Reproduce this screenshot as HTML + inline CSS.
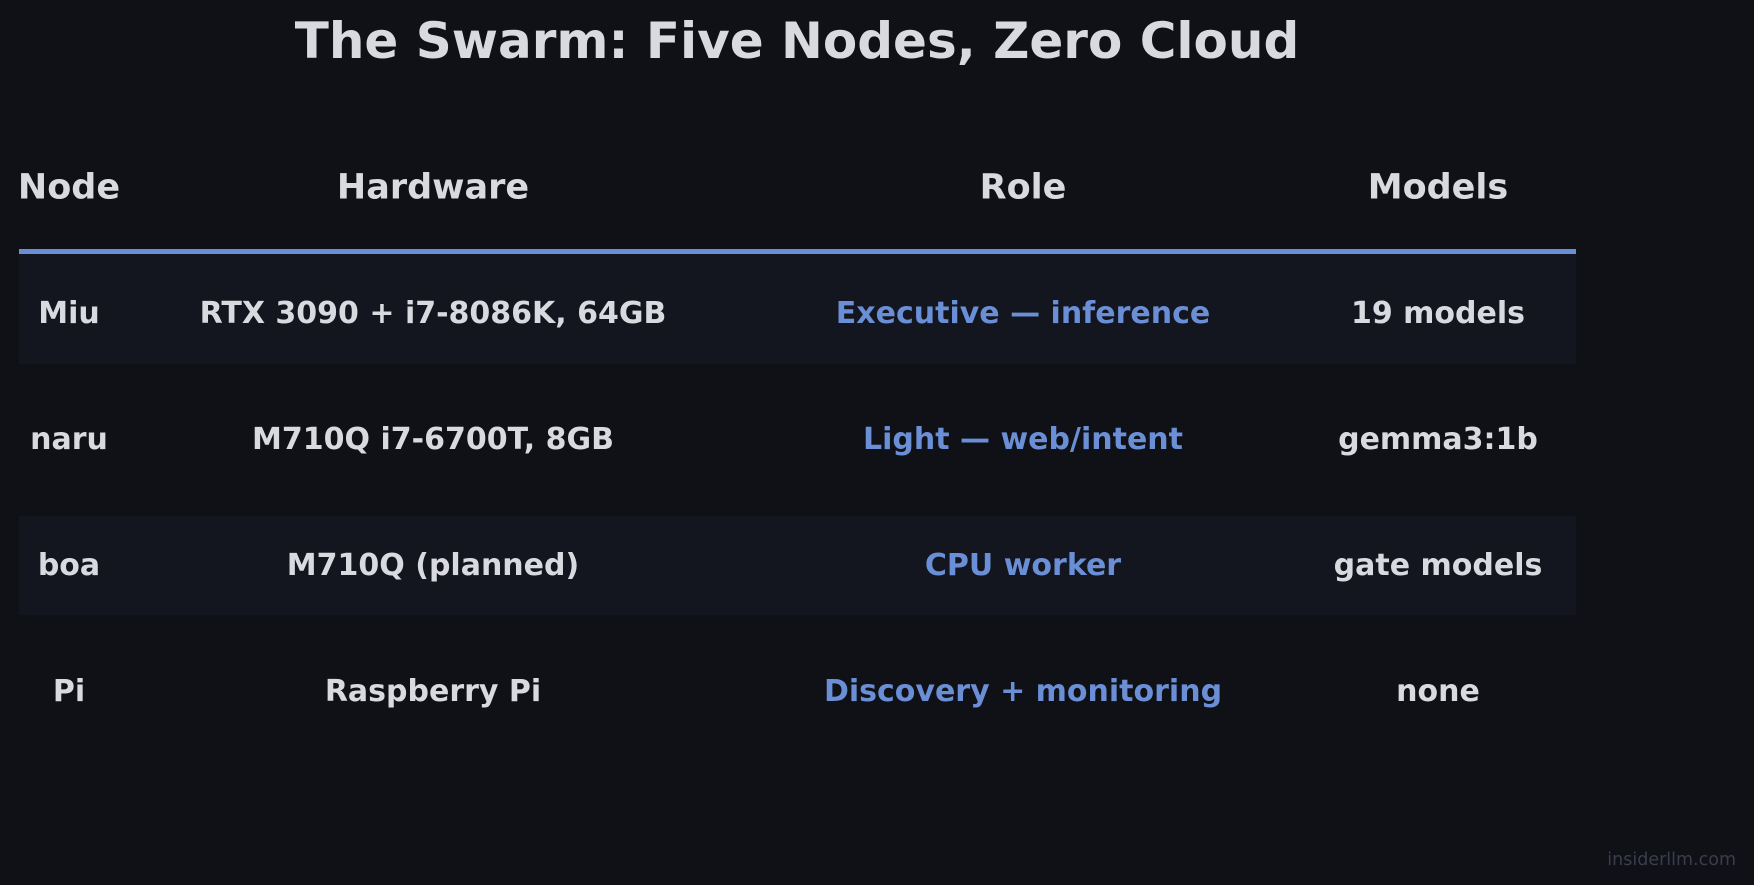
<!DOCTYPE html>
<html><head><meta charset="utf-8"><style>
html,body{margin:0;padding:0;width:1754px;height:885px;background:#101116;overflow:hidden;font-family:"DejaVu Sans","Liberation Sans",sans-serif;font-weight:bold;color:#d8dae0}
.t{position:absolute;white-space:nowrap;transform:translate(-50%,-50%);line-height:1}
.h{font-size:35px}
.c{font-size:30px}
.b{color:#6b8fd6}
.bar{position:absolute;left:19px;width:1557px}
</style></head><body>
<div class="t" style="left:797px;top:41px;font-size:50px">The Swarm: Five Nodes, Zero Cloud</div>
<div class="t h" style="left:69px;top:188px">Node</div>
<div class="t h" style="left:433px;top:188px">Hardware</div>
<div class="t h" style="left:1023px;top:188px">Role</div>
<div class="t h" style="left:1438px;top:188px">Models</div>
<div class="bar" style="top:249px;height:5px;background:#6b8fd6"></div>
<div class="bar" style="top:254px;height:110px;background:#13161e"></div>
<div class="bar" style="top:516px;height:99px;background:#13161e"></div>
<div class="t c" style="left:69px;top:314px">Miu</div>
<div class="t c" style="left:433px;top:314px">RTX 3090 + i7-8086K, 64GB</div>
<div class="t c b" style="left:1023px;top:314px">Executive — inference</div>
<div class="t c" style="left:1438px;top:314px">19 models</div>
<div class="t c" style="left:69px;top:440px">naru</div>
<div class="t c" style="left:433px;top:440px">M710Q i7-6700T, 8GB</div>
<div class="t c b" style="left:1023px;top:440px">Light — web/intent</div>
<div class="t c" style="left:1438px;top:440px">gemma3:1b</div>
<div class="t c" style="left:69px;top:566px">boa</div>
<div class="t c" style="left:433px;top:566px">M710Q (planned)</div>
<div class="t c b" style="left:1023px;top:566px">CPU worker</div>
<div class="t c" style="left:1438px;top:566px">gate models</div>
<div class="t c" style="left:69px;top:692px">Pi</div>
<div class="t c" style="left:433px;top:692px">Raspberry Pi</div>
<div class="t c b" style="left:1023px;top:692px">Discovery + monitoring</div>
<div class="t c" style="left:1438px;top:692px">none</div>
<div style="position:absolute;right:18px;top:850px;font-size:17.5px;font-weight:normal;color:#3a3d4c">insiderllm.com</div>
</body></html>
